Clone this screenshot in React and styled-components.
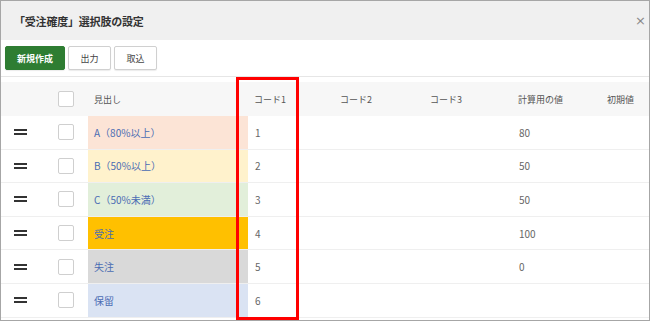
import React from 'react';
import styled, { createGlobalStyle } from 'styled-components';

const GlobalStyle = createGlobalStyle`
  html, body {
    margin: 0;
    padding: 0;
    background: #fff;
  }
  body {
    font-family: "Noto Sans CJK JP", "Noto Sans", sans-serif;
  }
`;

const rows = [
  { label: 'A（80%以上）', bg: '#fce4d6', code: '1', calc: '80' },
  { label: 'B（50%以上）', bg: '#fff2cc', code: '2', calc: '50' },
  { label: 'C（50%未満）', bg: '#e2efda', code: '3', calc: '50' },
  { label: '受注', bg: '#ffc000', code: '4', calc: '100' },
  { label: '失注', bg: '#d9d9d9', code: '5', calc: '0' },
  { label: '保留', bg: '#dae3f3', code: '6', calc: '' },
];

const COLS = '43px 44px 160px 86px 90px 88px 89px 1fr';

class App extends React.Component {
  render() {
    return (
      <>
        <GlobalStyle />
        <Dialog>
          <TitleBar>
            <Title>「受注確度」選択肢の設定</Title>
            <Close>×</Close>
          </TitleBar>
          <Toolbar>
            <Button primary>新規作成</Button>
            <Button>出力</Button>
            <Button>取込</Button>
          </Toolbar>
          <Table>
            <HeaderRow>
              <Cell />
              <Cell center>
                <Checkbox />
              </Cell>
              <HeadText>見出し</HeadText>
              <HeadText>コード1</HeadText>
              <HeadText>コード2</HeadText>
              <HeadText>コード3</HeadText>
              <HeadText>計算用の値</HeadText>
              <HeadText>初期値</HeadText>
            </HeaderRow>
            {rows.map((r) => (
              <Row key={r.code}>
                <Cell>
                  <Handle />
                </Cell>
                <Cell center>
                  <Checkbox />
                </Cell>
                <Label bg={r.bg}>{r.label}</Label>
                <Value>{r.code}</Value>
                <Value />
                <Value />
                <Value>{r.calc}</Value>
                <Value />
              </Row>
            ))}
          </Table>
          <Highlight />
        </Dialog>
      </>
    );
  }
}

const Dialog = styled.div`
  position: relative;
  width: 650px;
  height: 321px;
  box-sizing: border-box;
  border: 1px solid #a6a6a6;
  overflow: hidden;
  background: #fff;
`;

const TitleBar = styled.div`
  height: 39px;
  background: #f0f0f0;
  display: flex;
  align-items: center;
  justify-content: space-between;
  padding: 0 3px 0 13px;
`;

const Title = styled.div`
  font-size: 11px;
  font-weight: 600;
  color: #333;
  letter-spacing: -0.2px;
`;

const Close = styled.div`
  font-family: "DejaVu Sans", sans-serif;
  font-size: 13px;
  color: #888;
`;

const Toolbar = styled.div`
  height: 36px;
  display: flex;
  align-items: center;
  gap: 3px;
  padding: 0 4px;
  border-bottom: 1px solid #e6e6e6;
  margin-bottom: 5px;
`;

const Button = styled.button`
  height: 24px;
  padding: 0 ${(p) => (p.primary ? '6px' : '10px')};
  width: ${(p) => (p.primary ? '60px' : '43px')};
  margin: 0;
  border-radius: 2px;
  border: 1px solid ${(p) => (p.primary ? '#2e7d32' : '#d0d0d0')};
  background: ${(p) => (p.primary ? '#2e7d32' : '#fff')};
  color: ${(p) => (p.primary ? '#fff' : '#444')};
  font-family: inherit;
  font-size: 9px;
  font-weight: ${(p) => (p.primary ? 700 : 400)};
  box-shadow: 0 1px 1px rgba(0, 0, 0, 0.08);
`;

const Table = styled.div`
  display: flex;
  flex-direction: column;
`;

const HeaderRow = styled.div`
  display: grid;
  grid-template-columns: ${COLS};
  height: 34px;
  background: #f7f7f7;
`;

const Row = styled.div`
  display: grid;
  grid-template-columns: ${COLS};
  height: 33.6px;
  box-sizing: border-box;
  border-bottom: 1px solid #efefef;
`;

const Cell = styled.div`
  display: flex;
  align-items: center;
  justify-content: ${(p) => (p.center ? 'center' : 'flex-start')};
  padding-left: ${(p) => (p.center ? '0' : '13px')};
`;

const HeadText = styled.div`
  display: flex;
  align-items: center;
  padding-left: 6px;
  font-size: 9px;
  color: #555;
`;

const Label = styled.div`
  display: flex;
  align-items: center;
  padding-left: 6px;
  background: ${(p) => p.bg};
  font-size: 10px;
  color: #4a6cb3;
`;

const Value = styled.div`
  display: flex;
  align-items: center;
  padding-left: 7px;
  font-size: 10px;
  color: #666;
`;

const Checkbox = styled.span`
  display: block;
  width: 14px;
  height: 14px;
  border: 1px solid #cfcfcf;
  border-radius: 2px;
  background: #fff;
`;

const Handle = styled.span`
  display: block;
  width: 13px;
  height: 6px;
  border-top: 2px solid #333;
  border-bottom: 2px solid #333;
  box-sizing: border-box;
`;

const Highlight = styled.div`
  position: absolute;
  left: 235px;
  top: 76px;
  width: 63px;
  height: 243px;
  box-sizing: border-box;
  border: 3px solid #ff0000;
  pointer-events: none;
`;

export default App;
